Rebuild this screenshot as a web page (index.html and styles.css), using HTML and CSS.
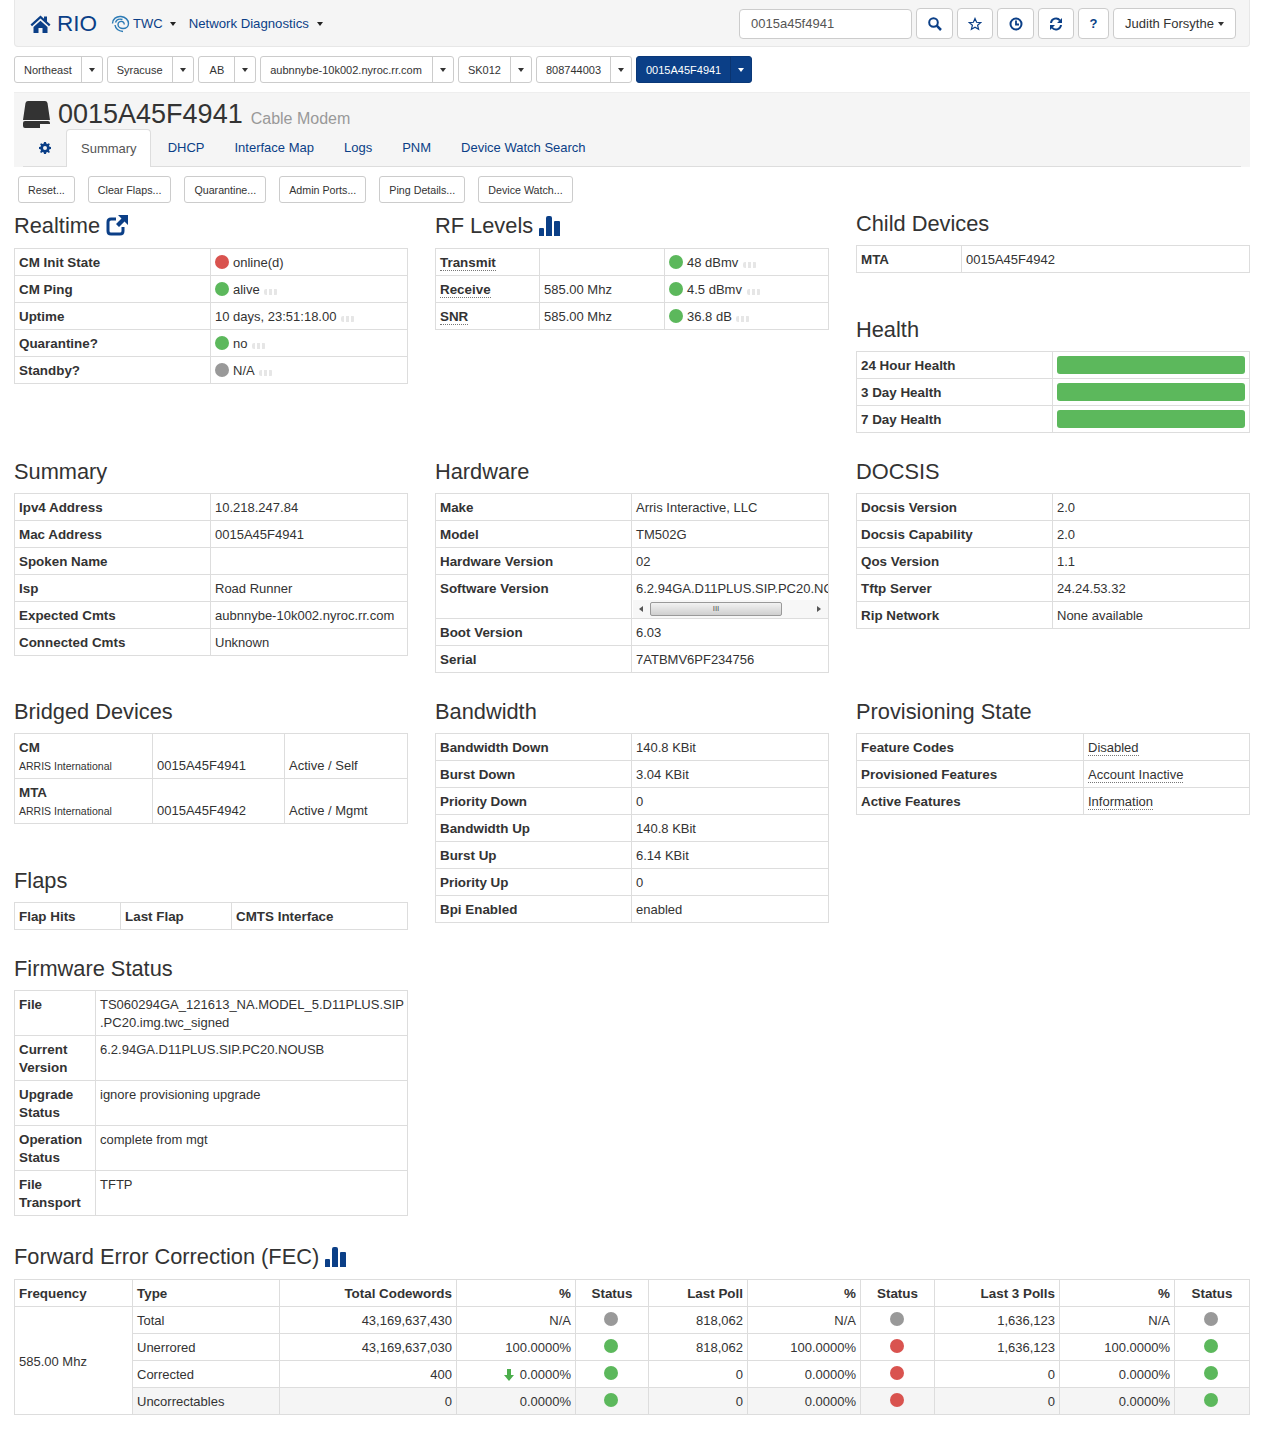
FILE: index.html
```html
<!DOCTYPE html>
<html lang="en">
<head>
<meta charset="UTF-8">
<title>RIO - 0015A45F4941</title>
<link rel="stylesheet" href="styles.css">
</head>
<body>
<svg class="sprites" width="0" height="0">
<symbol id="bars" viewBox="0 0 21 20"><path d="M0 13q0-1 1-1h3q1 0 1 1v7H0zM7 2q0-2 2-2h2q2 0 2 2v18H7zM15 6q0-1 1-1h4q1 0 1 1v14h-6z"/></symbol>
</svg>

<!-- Top nav -->
<div class="navbar">
<a class="brand">
<svg class="icon-home" viewBox="0 0 20 18"><path d="M10 .5 0 9.600l1.500 1.600L10 3.600l8.500 7.600 1.500-1.600-3.500-3.200V1.500h-3v2.200zM3 12v6h5v-5h4v5h5v-6l-7-6.200z"/></svg>
RIO
</a>
<a class="nav-link twc">
<svg class="icon-twc" viewBox="0 0 18 18"><path d="M1 8.500C1 4 5 1 9.500 1.500 14 2 17 5 17 8.500c0 3-2.500 5-5.500 5-2.500 0-5-1.500-5-4 0-2 2-3.500 4-3 1.500.3 2.500 1.500 2 3M3.500 10c.5 3.500 3.500 6 8 6.500M4 7.500C5 4.500 8 3.500 11 4.500" /></svg>
TWC <span class="caret"></span>
</a>
<a class="nav-link">Network Diagnostics <span class="caret"></span></a>
<div class="nav-right">
<input class="search" value="0015a45f4941">
<button class="nav-btn wide"><svg viewBox="0 0 14 14"><circle cx="5.500" cy="5.500" r="4.300"/><path class="thick" d="m8.700 8.700 4.300 4.300"/></svg></button>
<button class="nav-btn"><svg viewBox="0 0 14 14"><path class="thin" d="m7 1.500 1.600 3.800 4 .3-3 2.700 1 4L7 10.200l-3.600 2.100 1-4-3-2.700 4-.3z"/></svg></button>
<button class="nav-btn wide"><svg viewBox="0 0 14 14"><circle cx="7" cy="7" r="5.500"/><path class="mid" d="M7 3.500V7.500H10"/></svg></button>
<button class="nav-btn"><svg viewBox="0 0 14 14"><path d="M2 6a5 5 0 0 1 9-2.500M12 8a5 5 0 0 1-9 2.500"/><path class="solid" d="M13 1v5H8zM1 13V8h5z"/></svg></button>
<button class="nav-btn btn-help">?</button>
<button class="nav-btn btn-user">Judith Forsythe <span class="caret caret-dark"></span></button>
</div>
</div>

<!-- Breadcrumb of dropdowns -->
<div class="crumbs">
<div class="crumb"><span>Northeast</span><i><b class="caret caret-dark"></b></i></div>
<div class="crumb"><span>Syracuse</span><i><b class="caret caret-dark"></b></i></div>
<div class="crumb crumb-short"><span>AB</span><i><b class="caret caret-dark"></b></i></div>
<div class="crumb crumb-host"><span>aubnnybe-10k002.nyroc.rr.com</span><i><b class="caret caret-dark"></b></i></div>
<div class="crumb"><span>SK012</span><i><b class="caret caret-dark"></b></i></div>
<div class="crumb"><span>808744003</span><i><b class="caret caret-dark"></b></i></div>
<div class="crumb active"><span>0015A45F4941</span><i><b class="caret"></b></i></div>
</div>

<!-- Device header -->
<div class="device">
<div class="device-title">
<svg class="icon-drive" viewBox="0 0 27 27"><path d="M5 0h17q2 0 2.500 2L27 19H0L2.500 2Q3 0 5 0zM2 20h23q2 0 2 2v3q0 2-2 2H2q-2 0-2-2v-3q0-2 2-2z"/><rect class="dot" x="17" y="23" width="3" height="2"/><rect class="dot" x="22" y="23" width="3" height="2"/></svg>
<h1>0015A45F4941</h1>
<small>Cable Modem</small>
</div>
<ul class="tabs">
<li class="tab-gear"><svg viewBox="0 0 12 12"><path d="M5 0h2l.3 1.600 1.200.5L9.900 1.200l1 1L10 3.500l.5 1.200L12 5v2l-1.500.3-.5 1.200.9 1.400-1 1-1.400-.9-1.200.5L7 12H5l-.3-1.500-1.200-.5-1.400.9-1-1L2 8.500l-.5-1.200L0 7V5l1.500-.3.5-1.200-.9-1.300 1-1 1.400.9 1.200-.5zM6 4a2 2 0 1 0 0 4 2 2 0 0 0 0-4z" fill-rule="evenodd"/></svg></li>
<li class="active">Summary</li>
<li>DHCP</li>
<li>Interface Map</li>
<li>Logs</li>
<li>PNM</li>
<li>Device Watch Search</li>
</ul>
</div>

<div class="actions">
<button>Reset...</button>
<button>Clear Flaps...</button>
<button>Quarantine...</button>
<button>Admin Ports...</button>
<button>Ping Details...</button>
<button>Device Watch...</button>
</div>

<!-- Row 1 -->
<div class="row first">
<section>
<h3 class="tall">Realtime
<svg class="icon-share" viewBox="0 0 22 22"><path d="M17 13v4q0 3-3 3H5q-3 0-3-3V8q0-3 3-3h5"/><path class="solid" d="M12 1h10v10l-3.500-3.500L13 13l-3-3 5.500-5.500z"/></svg>
</h3>
<table class="half">
<tr><th>CM Init State</th><td><span class="dot red"></span>online(d)</td></tr>
<tr><th>CM Ping</th><td><span class="dot green"></span>alive <span class="spark"></span></td></tr>
<tr><th>Uptime</th><td>10 days, 23:51:18.00 <span class="spark"></span></td></tr>
<tr><th>Quarantine?</th><td><span class="dot green"></span>no <span class="spark"></span></td></tr>
<tr><th>Standby?</th><td><span class="dot gray"></span>N/A <span class="spark"></span></td></tr>
</table>
</section>
<section>
<h3 class="tall">RF Levels <svg class="icon-bars"><use href="#bars"/></svg></h3>
<table>
<colgroup><col class="rf-a"><col class="rf-b"><col></colgroup>
<tr><th><abbr>Transmit</abbr></th><td></td><td><span class="dot green"></span>48 dBmv <span class="spark"></span></td></tr>
<tr><th><abbr>Receive</abbr></th><td>585.00 Mhz</td><td><span class="dot green"></span>4.5 dBmv <span class="spark"></span></td></tr>
<tr><th><abbr>SNR</abbr></th><td>585.00 Mhz</td><td><span class="dot green"></span>36.8 dB <span class="spark"></span></td></tr>
</table>
</section>
<div class="stack">
<section class="spaced">
<h3>Child Devices</h3>
<table>
<colgroup><col class="child-a"><col></colgroup>
<tr><th>MTA</th><td><a class="plain">0015A45F4942</a></td></tr>
</table>
</section>
<section>
<h3>Health</h3>
<table class="half">
<tr><th>24 Hour Health</th><td class="bar-cell"><div class="bar"></div></td></tr>
<tr><th>3 Day Health</th><td class="bar-cell"><div class="bar"></div></td></tr>
<tr><th>7 Day Health</th><td class="bar-cell"><div class="bar"></div></td></tr>
</table>
</section>
</div>
</div>

<!-- Row 2 -->
<div class="row">
<section>
<h3>Summary</h3>
<table class="half">
<tr><th>Ipv4 Address</th><td>10.218.247.84</td></tr>
<tr><th>Mac Address</th><td>0015A45F4941</td></tr>
<tr><th>Spoken Name</th><td></td></tr>
<tr><th>Isp</th><td>Road Runner</td></tr>
<tr><th>Expected Cmts</th><td>aubnnybe-10k002.nyroc.rr.com</td></tr>
<tr><th>Connected Cmts</th><td>Unknown</td></tr>
</table>
</section>
<section>
<h3>Hardware</h3>
<table class="half">
<tr><th>Make</th><td>Arris Interactive, LLC</td></tr>
<tr><th>Model</th><td>TM502G</td></tr>
<tr><th>Hardware Version</th><td>02</td></tr>
<tr class="top"><th>Software Version</th><td class="scroll-cell"><div class="clip">6.2.94GA.D11PLUS.SIP.PC20.NOUSB</div>
<div class="scrollbar"><span class="arrow left"></span><span class="thumb">III</span><span class="arrow right"></span></div></td></tr>
<tr><th>Boot Version</th><td>6.03</td></tr>
<tr><th>Serial</th><td>7ATBMV6PF234756</td></tr>
</table>
</section>
<section>
<h3>DOCSIS</h3>
<table class="half">
<tr><th>Docsis Version</th><td>2.0</td></tr>
<tr><th>Docsis Capability</th><td>2.0</td></tr>
<tr><th>Qos Version</th><td>1.1</td></tr>
<tr><th>Tftp Server</th><td>24.24.53.32</td></tr>
<tr><th>Rip Network</th><td>None available</td></tr>
</table>
</section>
</div>

<!-- Row 3 -->
<div class="row">
<div class="stack">
<section class="spaced">
<h3>Bridged Devices</h3>
<table class="bridged">
<colgroup><col class="br-a"><col class="br-b"><col></colgroup>
<tr><th>CM<small>ARRIS International</small></th><td>0015A45F4941</td><td>Active / Self</td></tr>
<tr><th>MTA<small>ARRIS International</small></th><td>0015A45F4942</td><td>Active / Mgmt</td></tr>
</table>
</section>
<section>
<h3>Flaps</h3>
<table>
<colgroup><col class="fl-a"><col class="fl-b"><col></colgroup>
<tr><th>Flap Hits</th><th>Last Flap</th><th>CMTS Interface</th></tr>
</table>
</section>
<section>
<h3>Firmware Status</h3>
<table class="top">
<colgroup><col class="fw-a"><col></colgroup>
<tr><th>File</th><td>TS060294GA_121613_NA.MODEL_5.D11PLUS.SIP<br>.PC20.img.twc_signed</td></tr>
<tr><th>Current Version</th><td>6.2.94GA.D11PLUS.SIP.PC20.NOUSB</td></tr>
<tr><th>Upgrade Status</th><td>ignore provisioning upgrade</td></tr>
<tr><th>Operation Status</th><td>complete from mgt</td></tr>
<tr><th>File Transport</th><td>TFTP</td></tr>
</table>
</section>
</div>
<section>
<h3>Bandwidth</h3>
<table class="half">
<tr><th>Bandwidth Down</th><td>140.8 KBit</td></tr>
<tr><th>Burst Down</th><td>3.04 KBit</td></tr>
<tr><th>Priority Down</th><td>0</td></tr>
<tr><th>Bandwidth Up</th><td>140.8 KBit</td></tr>
<tr><th>Burst Up</th><td>6.14 KBit</td></tr>
<tr><th>Priority Up</th><td>0</td></tr>
<tr><th>Bpi Enabled</th><td>enabled</td></tr>
</table>
</section>
<section>
<h3>Provisioning State</h3>
<table>
<colgroup><col class="pr-a"><col></colgroup>
<tr><th>Feature Codes</th><td><abbr>Disabled</abbr></td></tr>
<tr><th>Provisioned Features</th><td><abbr>Account Inactive</abbr></td></tr>
<tr><th>Active Features</th><td><abbr>Information</abbr></td></tr>
</table>
</section>
</div>

<!-- FEC -->
<section class="fec-wrap">
<h3 class="tall">Forward Error Correction (FEC) <svg class="icon-bars"><use href="#bars"/></svg></h3>
<table class="fec">
<colgroup>
<col class="c118"><col class="c147"><col class="c177"><col class="c119"><col class="c73">
<col class="c99"><col class="c113"><col class="c74"><col class="c125"><col class="c115"><col>
</colgroup>
<tr><th>Frequency</th><th>Type</th><th class="r">Total Codewords</th><th class="r">%</th><th class="c">Status</th><th class="r">Last Poll</th><th class="r">%</th><th class="c">Status</th><th class="r">Last 3 Polls</th><th class="r">%</th><th class="c">Status</th></tr>
<tr><td rowspan="4">585.00 Mhz</td><td>Total</td><td class="r">43,169,637,430</td><td class="r">N/A</td><td class="c"><span class="dot gray"></span></td><td class="r">818,062</td><td class="r">N/A</td><td class="c"><span class="dot gray"></span></td><td class="r">1,636,123</td><td class="r">N/A</td><td class="c"><span class="dot gray"></span></td></tr>
<tr><td>Unerrored</td><td class="r">43,169,637,030</td><td class="r">100.0000%</td><td class="c"><span class="dot green"></span></td><td class="r">818,062</td><td class="r">100.0000%</td><td class="c"><span class="dot red"></span></td><td class="r">1,636,123</td><td class="r">100.0000%</td><td class="c"><span class="dot green"></span></td></tr>
<tr><td>Corrected</td><td class="r">400</td><td class="r"><svg class="icon-down" viewBox="0 0 10 12"><path d="M3 0h4v6h3l-5 6-5-6h3z"/></svg> 0.0000%</td><td class="c"><span class="dot green"></span></td><td class="r">0</td><td class="r">0.0000%</td><td class="c"><span class="dot red"></span></td><td class="r">0</td><td class="r">0.0000%</td><td class="c"><span class="dot green"></span></td></tr>
<tr class="shade"><td>Uncorrectables</td><td class="r">0</td><td class="r">0.0000%</td><td class="c"><span class="dot green"></span></td><td class="r">0</td><td class="r">0.0000%</td><td class="c"><span class="dot red"></span></td><td class="r">0</td><td class="r">0.0000%</td><td class="c"><span class="dot green"></span></td></tr>
</table>
</section>
</body>
</html>
```

FILE: styles.css
```css
body {
    margin: 0;
    padding: 0 13px 18px 14px;
    background: #fff;
    color: #333;
    font-family: "Liberation Sans", Arial, sans-serif;
    font-size: 13px;
    line-height: 18px;
}
.sprites {
    position: absolute;
}

/* top nav */
.navbar {
    display: flex;
    align-items: center;
    height: 47px;
    box-sizing: border-box;
    padding: 1px 13px 0 15px;
    background: #f5f5f5;
    border: 1px solid #e7e7e7;
    border-top: 0;
    border-radius: 0 0 4px 4px;
    color: #0b3f87;
}
.brand {
    display: flex;
    align-items: center;
    font-size: 22.500px;
    margin-right: 14px;
}
.icon-home {
    width: 21px;
    height: 18px;
    margin-right: 6px;
    fill: #0b3f87;
}
.nav-link {
    display: flex;
    align-items: center;
    gap: 4px;
    margin-right: 13px;
    font-size: 13.200px;
}
.twc {
    gap: 3px;
    margin-right: 13px;
    font-size: 13px;
}
.icon-twc {
    width: 19px;
    height: 18px;
    fill: none;
    stroke: #2b7ab5;
    stroke-width: 1.400;
}
.caret {
    display: inline-block;
    width: 0;
    height: 0;
    margin-left: 4px;
    border-top: 4px solid #0b3f87;
    border-left: 3px solid transparent;
    border-right: 3px solid transparent;
}
.nav-link .caret {
    border-top-color: #222;
}
.caret-dark {
    border-top-color: #333;
}
.nav-right {
    display: flex;
    align-items: center;
    margin-left: auto;
    gap: 4px;
}
.search {
    width: 173px;
    height: 30px;
    box-sizing: border-box;
    padding: 0 11px;
    border: 1px solid #ccc;
    border-radius: 4px;
    background: #fff;
    color: #555;
    font: 13px "Liberation Sans", Arial, sans-serif;
}
.nav-btn {
    height: 31px;
    width: 36px;
    padding: 0;
    display: flex;
    align-items: center;
    justify-content: center;
    background: #fff;
    border: 1px solid #ccc;
    border-radius: 4px;
    color: #0b3f87;
    font: 13px "Liberation Sans", Arial, sans-serif;
}
.nav-btn.wide {
    width: 37px;
}
.nav-btn svg {
    width: 14px;
    height: 14px;
    fill: none;
    stroke: #0b3f87;
    stroke-width: 2;
}
.nav-btn svg .thin {
    stroke-width: 1.200;
}
.nav-btn svg .thick {
    stroke-width: 2.500;
}
.nav-btn svg .mid {
    stroke-width: 1.800;
}
.nav-btn svg .solid {
    fill: #0b3f87;
    stroke: none;
}
.btn-help {
    width: 31px;
    font-weight: bold;
}
.btn-user {
    width: 123px;
    color: #333;
}

/* dropdown breadcrumb */
.crumbs {
    display: flex;
    gap: 4px;
    margin-top: 9px;
}
.crumb {
    display: flex;
    height: 27px;
    box-sizing: border-box;
    border: 1px solid #ccc;
    border-radius: 3px;
    font-size: 11px;
    line-height: 26px;
    color: #333;
}
.crumb span {
    padding: 0 9px;
}
.crumb-short span {
    padding: 0 10px 0 11px;
}
.crumb-host span {
    padding: 0 10px 0 9px;
}
.crumb i {
    display: flex;
    align-items: center;
    justify-content: center;
    width: 20px;
    border-left: 1px solid #ccc;
}
.crumb .caret {
    margin: 0;
}
.crumb.active {
    background: #0b3f87;
    border-color: #0a3878;
    color: #fff;
}
.crumb.active i {
    border-left-color: #0a3470;
}
.crumb.active .caret {
    border-top-color: #fff;
}

/* device header */
.device {
    margin-top: 9px;
    height: 75px;
    box-sizing: border-box;
    padding: 7px 9px 0;
    background: #f5f5f5;
    border-top: 1px solid #eee;
}
.device-title {
    display: flex;
    align-items: center;
    height: 29px;
}
.icon-drive {
    width: 27px;
    height: 27px;
    margin-right: 8px;
    fill: #333;
}
.icon-drive .dot {
    fill: #f5f5f5;
}
.device-title h1 {
    margin: 0 8px 0 0;
    font-size: 27px;
    font-weight: normal;
    line-height: 29px;
}
.device-title small {
    font-size: 16px;
    color: #999;
    padding-top: 8px;
}
.tabs {
    display: flex;
    margin: 0;
    padding: 0;
    height: 38px;
    box-sizing: border-box;
    list-style: none;
    border-bottom: 1px solid #ddd;
    color: #0b3f87;
    font-size: 13px;
    line-height: 38px;
}
.tabs li {
    padding: 0 15px;
}
.tabs li.tab-gear {
    padding: 0 15px 0 16px;
    display: flex;
    align-items: center;
}
.tab-gear svg {
    width: 12px;
    height: 12px;
    fill: #0b3f87;
}
.tabs li.active {
    height: 38px;
    box-sizing: border-box;
    padding: 0 13px 0 14px;
    margin-right: 2px;
    background: #fff;
    border: 1px solid #ddd;
    border-bottom: 0;
    border-radius: 4px 4px 0 0;
    color: #555;
}

/* action buttons */
.actions {
    display: flex;
    gap: 13px;
    margin: 9px 0 6px 4px;
}
.actions button {
    height: 27px;
    padding: 0 9px;
    background: #fff;
    border: 1px solid #ccc;
    border-radius: 3px;
    color: #333;
    font: 10.700px "Liberation Sans", Arial, sans-serif;
}

/* sections */
.row {
    display: grid;
    grid-template-columns: repeat(3, 394px);
    gap: 27px;
    margin-bottom: 24px;
}
.stack {
    display: flex;
    flex-direction: column;
    gap: 24px;
}
.spaced {
    margin-bottom: 18px;
}
h3 {
    margin: 0 0 8px;
    padding-top: 2px;
    font-size: 21.800px;
    font-weight: normal;
    line-height: 26px;
}
h3.tall {
    line-height: 29px;
}
.icon-bars {
    width: 21px;
    height: 20px;
    vertical-align: -3px;
    fill: #0b3f87;
}
.icon-share {
    width: 22px;
    height: 22px;
    vertical-align: -3px;
    fill: none;
    stroke: #0b3f87;
    stroke-width: 3;
}
.icon-share .solid {
    fill: #0b3f87;
    stroke: none;
}

/* tables */
table {
    width: 100%;
    table-layout: fixed;
    border-collapse: collapse;
    font-size: 13px;
}
th, td {
    padding: 5px 4px 3px;
    border: 1px solid #ddd;
    text-align: left;
    white-space: nowrap;
}
th {
    font-size: 13.400px;
    font-weight: bold;
}
.half th {
    width: 187px;
}
.top th, .top td, tr.top th, tr.top td {
    vertical-align: top;
}
.top th, .top td {
    white-space: normal;
}
.rf-a { width: 104px; }
.rf-b { width: 125px; }
.child-a { width: 105px; }
.br-a { width: 138px; }
.br-b { width: 132px; }
.fl-a { width: 106px; }
.fl-b { width: 111px; }
.fw-a { width: 81px; }
.pr-a { width: 227px; }
abbr {
    border-bottom: 1px dotted #777;
}
.dot {
    display: inline-block;
    width: 14px;
    height: 14px;
    margin: 1px 4px 0 0;
    border-radius: 50%;
    vertical-align: top;
}
.red { background: #d9534f; }
.green { background: #5cb85c; }
.gray { background: #999; }
.spark {
    display: inline-block;
    width: 14px;
    height: 6px;
    margin-left: 1px;
    background: repeating-linear-gradient(90deg, #e6e6e6 0 3px, #fff 3px 5px);
    border-radius: 2px;
    vertical-align: -1px;
}
.bar-cell {
    padding: 4px;
}
.bar {
    height: 18px;
    background: #5cb85c;
    border-radius: 3px;
}
.bridged th {
    vertical-align: top;
}
.bridged td {
    vertical-align: bottom;
}
.bridged small {
    display: block;
    font-size: 10.500px;
    font-weight: normal;
}

/* fake scrollbar on long value */
td.scroll-cell {
    padding: 5px 0 0 4px;
}
.clip {
    overflow: hidden;
}
.scrollbar {
    display: flex;
    align-items: center;
    height: 18px;
    margin: 2px 0 0 -3px;
    background: #f7f7f7;
}
.arrow {
    width: 0;
    height: 0;
    border-top: 3px solid transparent;
    border-bottom: 3px solid transparent;
}
.arrow.left {
    margin-left: 6px;
    border-right: 4px solid #555;
}
.arrow.right {
    margin-left: 35px;
    border-left: 4px solid #555;
}
.thumb {
    width: 132px;
    height: 14px;
    margin-left: 7px;
    box-sizing: border-box;
    border: 1px solid #999;
    border-radius: 2px;
    background: linear-gradient(#f2f2f2, #cfcfcf);
    text-align: center;
    font-size: 8px;
    line-height: 11px;
    color: #555;
}

/* fec */
.c118 { width: 118px; }
.c147 { width: 147px; }
.c177 { width: 177px; }
.c119 { width: 119px; }
.c73 { width: 73px; }
.c99 { width: 99px; }
.c113 { width: 113px; }
.c74 { width: 74px; }
.c125 { width: 125px; }
.c115 { width: 115px; }
.r, th.r {
    text-align: right;
}
.c, th.c {
    text-align: center;
}
td.c {
    padding: 3px 6px 5px 4px;
}
.c .dot {
    display: block;
    margin: 0 auto;
}
.shade td {
    background: #f5f5f5;
}
.icon-down {
    width: 10px;
    height: 12px;
    margin-right: 2px;
    vertical-align: -2px;
    fill: #4cae4c;
}
```
